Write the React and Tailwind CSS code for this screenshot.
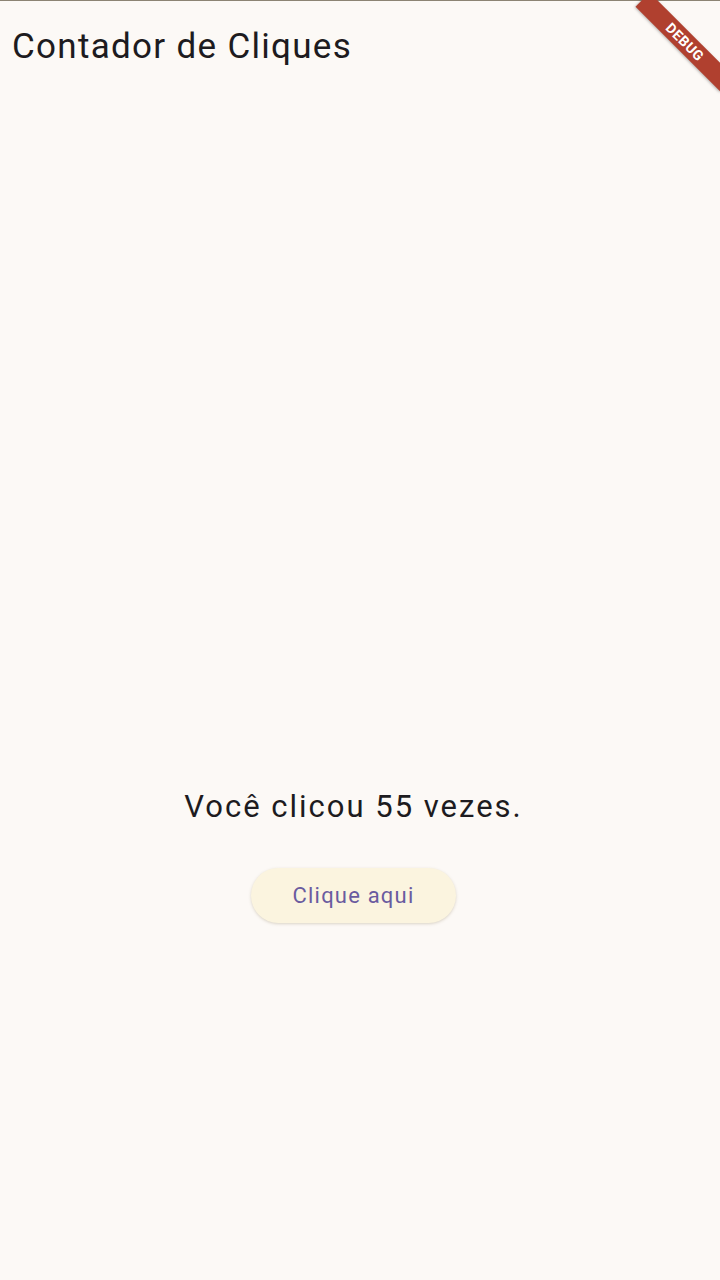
export default function App() {
  return (
    <div
      className="relative w-[720px] h-[1280px] overflow-hidden bg-[#fcf9f6] flex flex-col"
      style={{ fontFamily: 'Roboto, "Noto Sans", sans-serif' }}
    >
      <div className="h-px w-full bg-[#8c8474]" />
      <header className="h-[83px] flex items-start pl-3 pt-[28px]">
        <h1 className="text-[35px] leading-none text-[#1d1b20] font-normal tracking-[1.3px]">
          Contador de Cliques
        </h1>
      </header>
      <main className="flex flex-col items-center pt-[705px] pr-[13px]">
        <p className="text-[31px] leading-[36px] text-[#1d1b20] tracking-[2px]">
          Você clicou 55 vezes.
        </p>
        <button className="mt-[43px] h-[55px] w-[205px] rounded-full bg-[#fbf4df] text-[22px] font-normal text-[#6a5b9f] tracking-[1.2px] shadow-[0_1px_3px_rgba(120,100,60,0.25)] flex items-center justify-center">
          Clique aqui
        </button>
      </main>
      <div className="absolute top-[32px] left-[625px] w-[120px] h-[20px] rotate-45 bg-[#b0402f] shadow-[0_1px_3px_rgba(0,0,0,0.3)] flex items-center justify-center">
        <span className="text-[14px] font-bold text-white tracking-[0.5px] leading-none">DEBUG</span>
      </div>
    </div>
  );
}
